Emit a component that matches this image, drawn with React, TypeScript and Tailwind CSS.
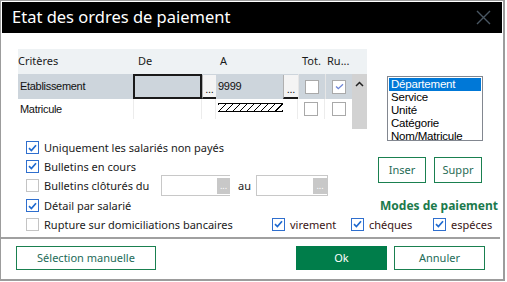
import React from "react";

function Cb({ checked }: { checked?: boolean }) {
  return (
    <span
      className={
        checked
          ? "w-[13px] h-[13px] shrink-0 border border-[#2f6fce] bg-white flex items-center justify-center"
          : "w-[13px] h-[13px] shrink-0 border border-[#c4c4c4] bg-white flex items-center justify-center"
      }
    >
      {checked && (
        <svg width="9" height="8" viewBox="0 0 9 8">
          <path d="M1 4.2 L3.4 6.5 L8 1.3" stroke="#1f6ad0" strokeWidth="1.7" fill="none" />
        </svg>
      )}
    </span>
  );
}

function GridCb({ checked }: { checked?: boolean }) {
  return (
    <span className="w-[14px] h-[14px] border border-[#a9a9a9] bg-white flex items-center justify-center">
      {checked && (
        <svg width="9" height="7" viewBox="0 0 9 7">
          <path d="M1 3.5 L3.3 5.6 L8 1.2" stroke="#6f86d6" strokeWidth="1.3" fill="none" />
        </svg>
      )}
    </span>
  );
}

export default function App() {
  const label = "font-['Noto_Sans',sans-serif] text-[11px] text-[#1b1b1b] leading-none";
  return (
    <div className="w-[507px] h-[282px] bg-white">
      <div className="w-[505px] h-[281px] border-t border-l border-r-2 border-b-2 border-[#9c9c9c] flex flex-col">
        {/* title bar */}
        <div className="h-[31px] mx-px mt-px bg-black flex items-center justify-between pl-[10px] pr-[11px] shrink-0">
          <span className="font-['Noto_Sans',sans-serif] text-[16.5px] text-white leading-none">Etat des ordres de paiement</span>
          <svg width="15" height="15" viewBox="0 0 15 15">
            <path d="M1 1 L14 14 M14 1 L1 14" stroke="#4a5763" strokeWidth="1.4" />
          </svg>
        </div>

        <div className="flex flex-col pl-[17px] pt-[16px]">
          <div className="flex">
            {/* left column */}
            <div className="flex flex-col w-[349px]">
              {/* grid */}
              <div className="w-[349px] h-[80px] flex flex-col font-['Liberation_Sans',sans-serif] text-[11px] text-[#111] tracking-[-0.3px]">
                <div className="h-[25px] bg-[#eef2f4] flex items-center font-['Noto_Sans',sans-serif] text-[11px] tracking-normal text-[#1b1b1b]">
                  <span className="w-[116px]">Critères</span>
                  <span className="w-[82px] pl-[4px]">De</span>
                  <span className="w-[82px] pl-[4px]">A</span>
                  <span className="w-[27px] pl-[4px]">Tot.</span>
                  <span className="w-[27px] pl-[2px]">Ru...</span>
                </div>
                <div className="flex h-[55px]">
                  <div className="w-[334px] flex flex-col">
                    {/* row 1 */}
                    <div className="h-[25px] bg-[#cdd5dc] flex">
                      <div className="w-[115px] flex items-center pl-[2px]">Etablissement</div>
                      <div className="w-[69px] border-2 border-[#1a1a1a]"></div>
                      <div className="w-[14px] bg-[#f4f4f4] border-l border-[#b0b0b0] border-b-2 border-b-[#1a1a1a] mt-px flex items-end justify-center pb-[2px] leading-none">...</div>
                      <div className="w-[67px] flex items-center pl-[2px]">9999</div>
                      <div className="w-[15px] bg-[#f4f4f4] border-l border-[#b0b0b0] border-b-2 border-b-[#1a1a1a] mt-px flex items-end justify-center pb-[2px] leading-none">...</div>
                      <div className="w-[27px] flex items-center justify-center border-l border-[#e6e6e6]">
                        <GridCb />
                      </div>
                      <div className="w-[27px] flex items-center justify-center border-l border-[#e6e6e6]">
                        <GridCb checked />
                      </div>
                    </div>
                    {/* row 2 */}
                    <div className="h-[20px] flex">
                      <div className="w-[116px] flex items-center pl-[2px] border-r border-[#ececec]">Matricule</div>
                      <div className="w-[68px] border-r border-[#ececec]"></div>
                      <div className="w-[14px] border-r border-[#ececec]"></div>
                      <div className="w-[67px] pl-[2px] pt-[4px]">
                        <div className="h-[9px] w-[65px] border-t border-b border-black bg-[repeating-linear-gradient(135deg,#000_0_1px,transparent_1px_5px)]"></div>
                      </div>
                      <div className="w-[15px] border-r border-[#ececec]"></div>
                      <div className="w-[27px] flex items-center justify-center border-r border-[#ececec]">
                        <GridCb />
                      </div>
                      <div className="w-[27px] flex items-center justify-center">
                        <GridCb />
                      </div>
                    </div>
                  </div>
                  {/* scrollbar */}
                  <div className="w-[15px] bg-[#d2d2d2] flex justify-center pt-[7px]">
                    <svg width="9" height="6" viewBox="0 0 9 6">
                      <path d="M1 5 L4.5 1.5 L8 5" stroke="#222" strokeWidth="1.5" fill="none" />
                    </svg>
                  </div>
                </div>
              </div>

              {/* checkbox rows */}
              <div className="h-[19px] mt-[9px] flex items-center pl-[8px] gap-[5px]">
                <Cb checked />
                <span className={label}>Uniquement les salariés non payés</span>
              </div>
              <div className="h-[18px] flex items-center pl-[8px] gap-[5px]">
                <Cb checked />
                <span className={label}>Bulletins en cours</span>
              </div>
              <div className="h-[21px] flex items-center pl-[8px]">
                <Cb />
                <span className={label + " ml-[5px] w-[117px]"}>Bulletins clôturés du</span>
                <div className="w-[69px] h-[21px] border border-[#c8c8c8] border-r-0 flex justify-end items-center">
                  <span className="w-[13px] h-[16px] bg-[#c8c8c8] text-white text-[9px] leading-none flex items-center justify-center">...</span>
                </div>
                <span className={label + " ml-[8px] w-[18px]"}>au</span>
                <div className="w-[72px] h-[21px] border border-[#c8c8c8] flex justify-end items-center">
                  <span className="w-[14px] h-[16px] bg-[#c8c8c8] text-white text-[9px] leading-none flex items-center justify-center">...</span>
                </div>
              </div>
            </div>

            {/* right column */}
            <div className="ml-[11px] w-[105px] flex flex-col">
              <div className="ml-[9px] mt-[27px] w-[96px] h-[65px] border border-[#828790] flex flex-col p-px font-['Liberation_Sans',sans-serif] text-[11.5px] leading-[13px] text-black tracking-[-0.2px]">
                <span className="bg-[#0078d7] text-white pl-[2px]">Département</span>
                <span className="pl-[2px]">Service</span>
                <span className="pl-[2px]">Unité</span>
                <span className="pl-[2px]">Catégorie</span>
                <span className="pl-[2px]">Nom/Matricule</span>
              </div>
              <div className="mt-[16px] flex gap-[8px]">
                <button className="w-[48px] h-[26px] border border-[#1a8050] font-['Noto_Sans',sans-serif] text-[11px] text-[#1f6b55]">Inser</button>
                <button className="w-[48px] h-[26px] border border-[#1a8050] font-['Noto_Sans',sans-serif] text-[11px] text-[#1f6b55]">Suppr</button>
              </div>
            </div>
          </div>

          {/* détail row */}
          <div className="h-[19px] flex items-center pl-[8px]">
            <Cb checked />
            <span className={label + " ml-[5px]"}>Détail par salarié</span>
            <span className="ml-auto mr-[5px] font-['Noto_Sans',sans-serif] text-[12px] font-bold text-[#1b7a4c] leading-none">Modes de paiement</span>
          </div>
          {/* rupture row */}
          <div className="h-[18px] flex items-center pl-[8px]">
            <Cb />
            <span className={label + " ml-[5px] w-[228px]"}>Rupture sur domiciliations bancaires</span>
            <Cb checked />
            <span className={label + " ml-[5px] w-[61px] text-[#3a1414]"}>virement</span>
            <Cb checked />
            <span className={label + " ml-[5px] w-[64px] text-[#3a1414]"}>chéques</span>
            <Cb checked />
            <span className={label + " ml-[5px] text-[#3a1414]"}>espéces</span>
          </div>
        </div>

        {/* separator */}
        <div className="mt-[4px] h-[2px] w-[499px] bg-[#a0a0a0]"></div>

        {/* bottom buttons */}
        <div className="mt-[7px] flex">
          <button className="ml-[15px] w-[140px] h-[24px] border border-[#1a8050] font-['Noto_Sans',sans-serif] text-[11px] text-[#236b58]">Sélection manuelle</button>
          <button className="ml-[140px] w-[91px] h-[24px] bg-[#007d4a] font-['Noto_Sans',sans-serif] text-[11px] text-white">Ok</button>
          <button className="ml-[7px] w-[91px] h-[24px] border border-[#1a8050] font-['Noto_Sans',sans-serif] text-[11px] text-[#236b58]">Annuler</button>
        </div>
      </div>
    </div>
  );
}
